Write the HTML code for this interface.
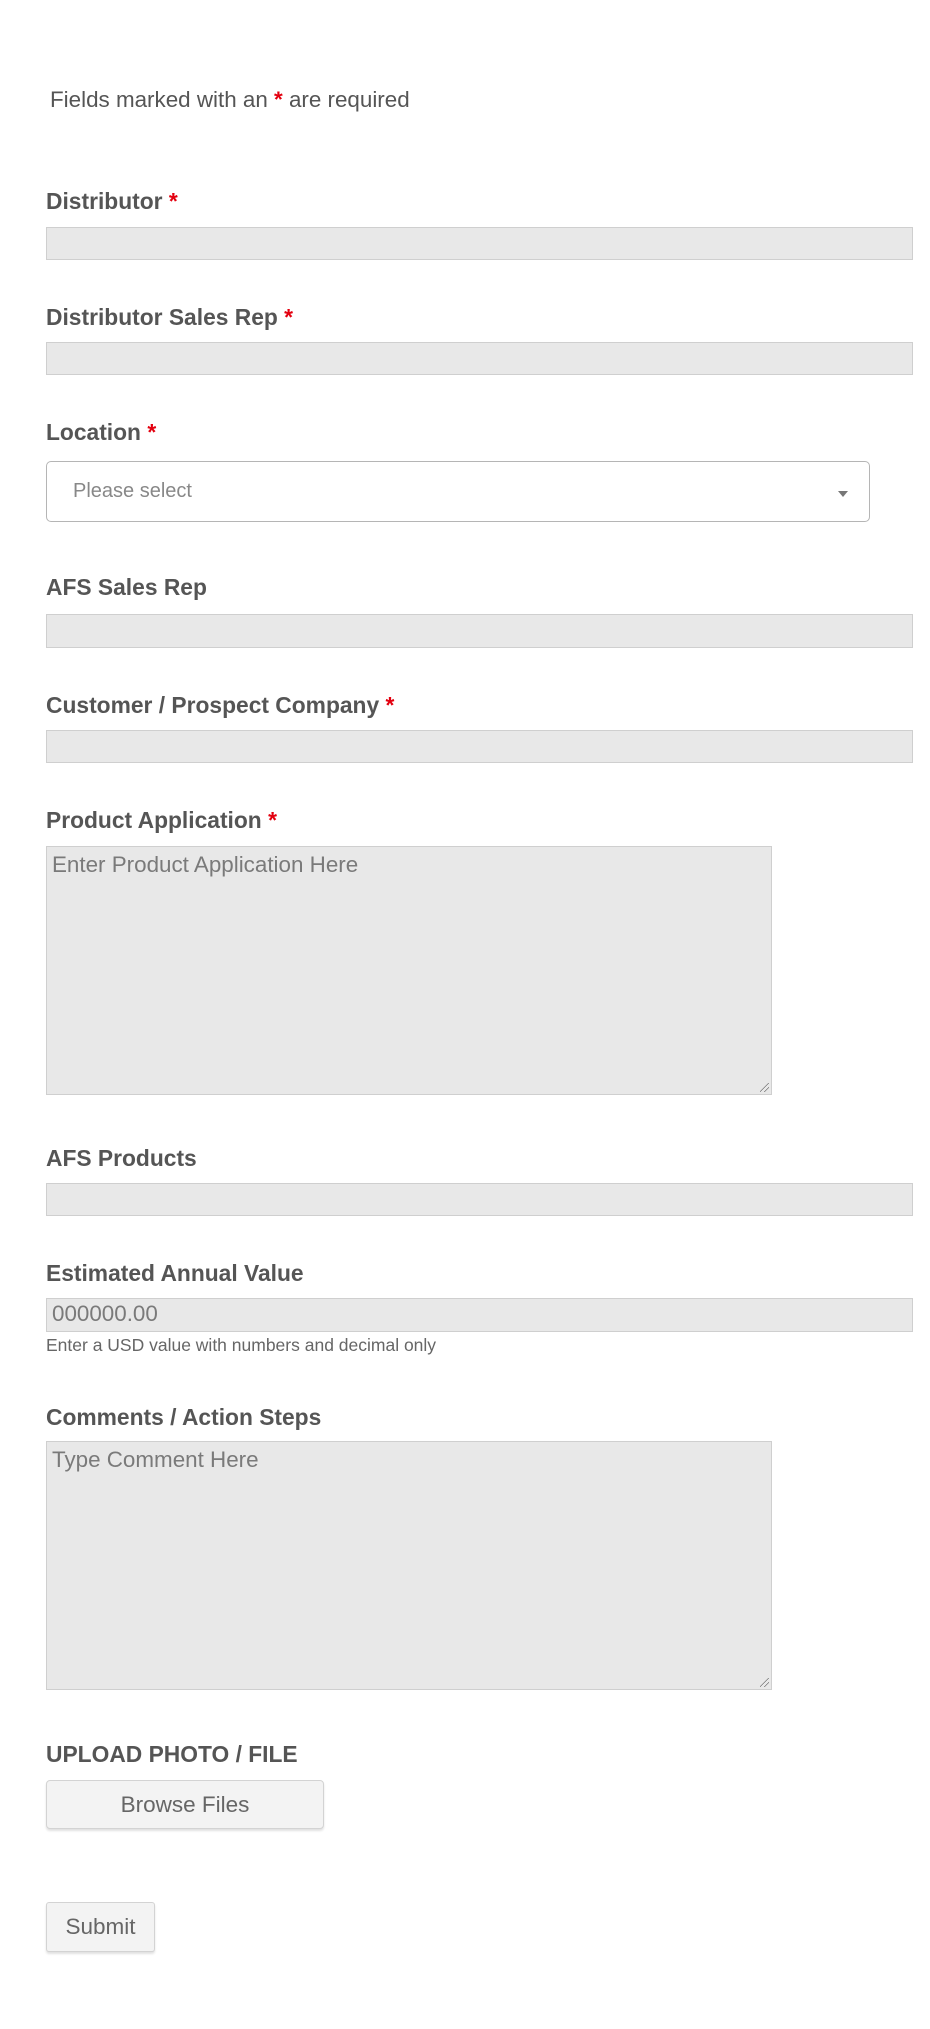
<!DOCTYPE html>
<html><head><meta charset="utf-8"><style>
*{box-sizing:border-box;margin:0;padding:0}
body{width:930px;height:2029px;background:#fff;font-family:"Liberation Sans",Arial,sans-serif;color:#555;position:relative;overflow:hidden}
.a{position:absolute}
.lbl{position:absolute;left:46px;font-weight:bold;font-size:22.8px;line-height:26px;color:#555}
.r{color:#e3000f}
.in{position:absolute;left:46px;width:867px;background:#e8e8e8;border:1px solid #cfcfcf}
.ta{position:absolute;left:46px;width:726px;background:#e8e8e8;border:1px solid #cfcfcf;color:#7a7a7a;font-size:22.4px;padding:5px 5px}
.ph{color:#7a7a7a;font-size:22.4px;line-height:30px;padding-left:5px}
.btn{position:absolute;left:46px;background:#f3f3f3;border:1px solid #d3d3d3;border-radius:4px;box-shadow:0 2px 2px rgba(0,0,0,.12);color:#666;font-size:22.5px;text-align:center}
.grip{position:absolute;right:2px;bottom:2px;width:9px;height:9px;background:linear-gradient(135deg,transparent 45%,#777 45%,#777 52%,transparent 52%,transparent 70%,#777 70%,#777 77%,transparent 77%)}
</style></head><body>
<div class="a" style="left:50px;top:87px;font-size:22.4px;color:#555">Fields marked with an <span class="r" style="font-weight:bold">*</span> are required</div>

<div class="lbl" style="top:188px">Distributor <span class="r">*</span></div>
<div class="in" style="top:227px;height:33px"></div>

<div class="lbl" style="top:304px">Distributor Sales Rep <span class="r">*</span></div>
<div class="in" style="top:342px;height:33px"></div>

<div class="lbl" style="top:419px">Location <span class="r">*</span></div>
<div class="a" style="left:46px;top:461px;width:824px;height:61px;border:1px solid #b5b5b5;border-radius:5px;background:#fff">
<div class="a" style="left:26px;top:18px;font-size:20px;color:#888">Please select</div>
<div class="a" style="left:791px;top:29px;width:0;height:0;border-left:5px solid transparent;border-right:5px solid transparent;border-top:6px solid #777"></div>
</div>

<div class="lbl" style="top:574px">AFS Sales Rep</div>
<div class="in" style="top:614px;height:34px"></div>

<div class="lbl" style="top:692px">Customer / Prospect Company <span class="r">*</span></div>
<div class="in" style="top:730px;height:33px"></div>

<div class="lbl" style="top:807px">Product Application <span class="r">*</span></div>
<div class="ta" style="top:846px;height:249px">Enter Product Application Here<div class="grip"></div></div>

<div class="lbl" style="top:1145px">AFS Products</div>
<div class="in" style="top:1183px;height:33px"></div>

<div class="lbl" style="top:1260px">Estimated Annual Value</div>
<div class="in" style="top:1298px;height:34px"><div class="ph">000000.00</div></div>
<div class="a" style="left:46px;top:1335px;font-size:17.5px;color:#666">Enter a USD value with numbers and decimal only</div>

<div class="lbl" style="top:1404px">Comments / Action Steps</div>
<div class="ta" style="top:1441px;height:249px">Type Comment Here<div class="grip"></div></div>

<div class="lbl" style="top:1741px">UPLOAD PHOTO / FILE</div>
<div class="btn" style="top:1780px;width:278px;height:49px;line-height:47px">Browse Files</div>

<div class="btn" style="top:1902px;width:109px;height:50px;line-height:48px;border-radius:3px">Submit</div>
</body></html>
